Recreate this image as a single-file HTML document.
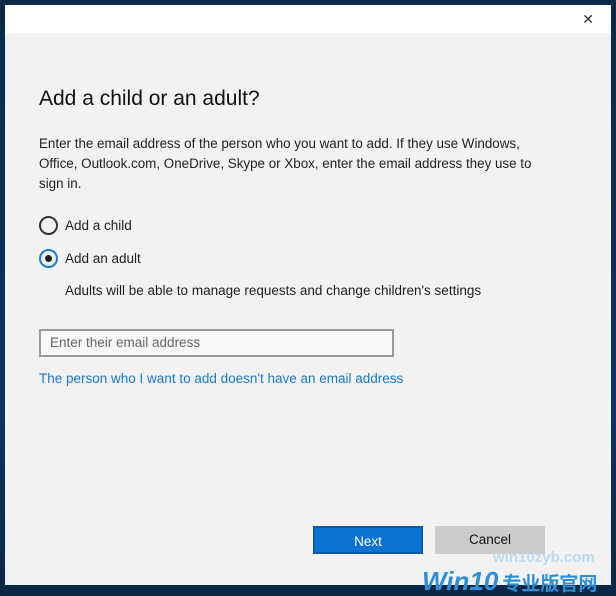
<!DOCTYPE html>
<html><head><style>
body{margin:0;width:616px;height:596px;background:linear-gradient(180deg,#0b2a4a,#0d3560 70%,#0a2744);position:relative;overflow:hidden;font-family:"Liberation Sans",sans-serif;}
.dlg{position:absolute;left:5px;top:5px;width:606px;height:580px;background:#f2f2f2;}
.tb{position:absolute;left:0;top:0;width:606px;height:28px;background:#fff;}
.x{position:absolute;right:17px;top:6px;font-size:14px;color:#333;}
.t{position:absolute;white-space:nowrap;color:#1f1f1f;}
.r{position:absolute;width:15px;height:15px;border:2px solid #333;border-radius:50%;}
.btn{position:absolute;top:521px;width:110px;height:28px;text-align:center;line-height:28px;font-size:13.5px;box-sizing:border-box;}
</style></head><body>
<div class="dlg">
<div class="tb"><div class="x">✕</div></div>
<div class="t" style="left:34px;top:82px;font-size:21px;color:#111;">Add a child or an adult?</div>
<div class="t" style="left:34px;top:129px;font-size:13.4px;line-height:20px;">Enter the email address of the person who you want to add. If they use Windows,<br>Office, Outlook.com, OneDrive, Skype or Xbox, enter the email address they use to<br>sign in.</div>
<div class="r" style="left:34px;top:211px;"></div>
<div class="t" style="left:60px;top:213px;font-size:13.5px;">Add a child</div>
<div class="r" style="left:34px;top:244px;border-color:#1a7ad6;"><div style="position:absolute;left:4px;top:4px;width:7px;height:7px;border-radius:50%;background:#222;"></div></div>
<div class="t" style="left:60px;top:246px;font-size:13.5px;">Add an adult</div>
<div class="t" style="left:60px;top:278px;font-size:13.5px;">Adults will be able to manage requests and change children's settings</div>
<div style="position:absolute;left:34px;top:324px;width:355px;height:28px;box-sizing:border-box;border:2px solid #999;background:#f7f7f7;"></div>
<div class="t" style="left:45px;top:330px;font-size:13.5px;color:#666;">Enter their email address</div>
<div class="t" style="left:34px;top:366px;font-size:13.5px;color:#1a78c8;">The person who I want to add doesn't have an email address</div>
<div class="btn" style="left:308px;background:#0b72d4;border:2px solid #0a5aa8;color:#fff;">Next</div>
<div class="btn" style="left:430px;background:#cccccc;color:#111;">Cancel</div>
</div>
<div class="t" style="left:493px;top:549px;font-size:15px;font-weight:bold;color:rgba(170,210,240,.75);">win10zyb.com</div>
<div class="t" style="left:422px;top:568px;font-size:26px;font-weight:bold;font-style:italic;color:#2d8fd8;line-height:26px;">Win10<span style="font-family:'Noto Sans CJK SC',sans-serif;font-size:19px;font-style:normal;margin-left:4px;">专业版官网</span></div>
</body></html>
